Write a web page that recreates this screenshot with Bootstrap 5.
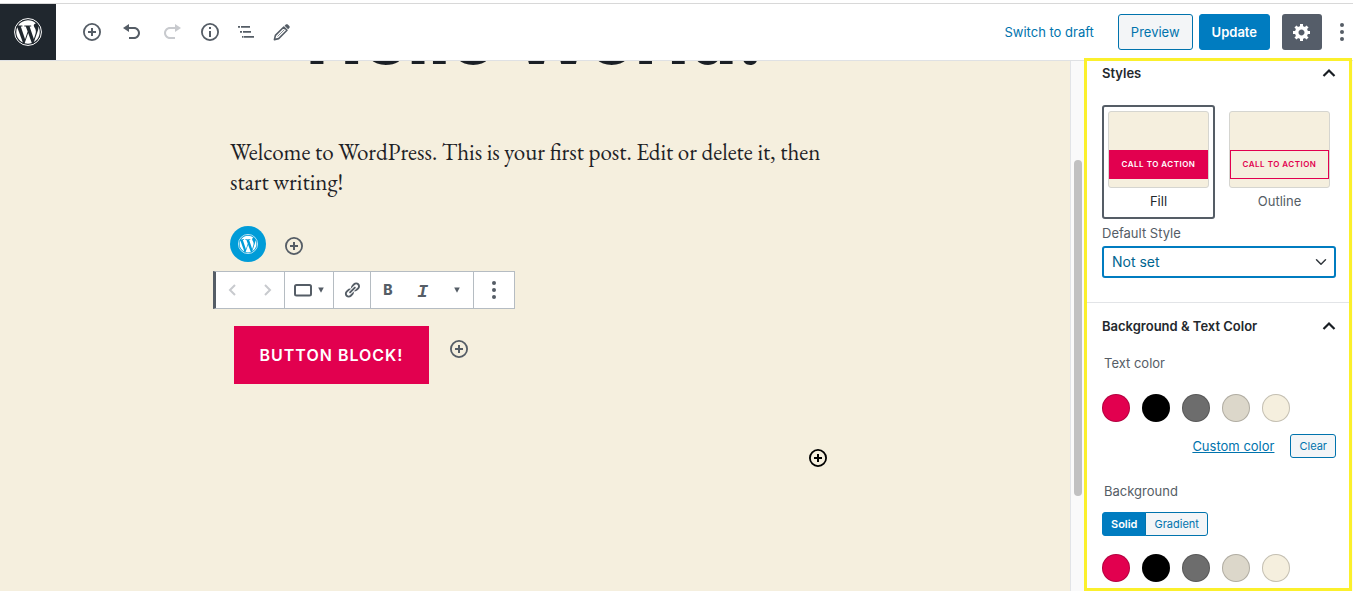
<!DOCTYPE html>
<html lang="en">
<head>
<meta charset="utf-8">
<meta name="viewport" content="width=device-width, initial-scale=1">
<title>Edit Post</title>
<link href="https://cdn.jsdelivr.net/npm/bootstrap@5.3.0/dist/css/bootstrap.min.css" rel="stylesheet">
<style>
  :root { --wp-blue: #007cc0; --ink: #555d66; --cream: #f5efde; --accent: #e2004f; --rule: #dfe1e4; }
  body { font-family: Inter, "Liberation Sans", sans-serif; font-size: 13px; line-height: 20px; color: #23282d; padding-top: 3px; }
  svg { display: block; fill: currentColor; }
  .icon-btn { border: 0; background: none; padding: 0; color: var(--ink); display: flex; align-items: center; justify-content: center; }
  .icon-btn:disabled { color: #c8cace; }
  .topbar { height: 58px; border-top: 1px solid #d8d8d8; border-bottom: 1px solid var(--rule); }
  .site-logo { width: 56px; background: #20272e; color: #fff; }
  .tools { gap: 20px; padding-left: 26px; }
  .tools + .tools { gap: 18px; padding-left: 18px; }
  .actions { gap: 6px; padding: 0 12px 0 24px; }
  .btn { --bs-btn-font-size: 13px; --bs-btn-line-height: 20px; --bs-btn-border-radius: 3px; }
  .btn-wp { --bs-btn-color: #fff; --bs-btn-bg: var(--wp-blue); --bs-btn-border-color: var(--wp-blue); --bs-btn-font-weight: 600; }
  .btn-wp-line { --bs-btn-color: #0073ad; --bs-btn-bg: #f3f5f7; --bs-btn-border-color: #0073ad; }
  .btn-bar { --bs-btn-padding-x: 12px; --bs-btn-padding-y: 7px; }
  .btn-mini { --bs-btn-font-size: 11px; --bs-btn-line-height: 16px; --bs-btn-padding-x: 8px; --bs-btn-padding-y: 3px; }
  .gear { width: 40px; height: 36px; border-radius: 3px; background: #555d69; color: #fff; margin-right: 9px; }
  .wp-link { color: #0073ad; }

  .workspace, .canvas { min-height: 0; min-width: 0; }
  .canvas { background: var(--cream); }
  .post { max-width: 610px; }
  .post-title { font-size: 75px; line-height: 80px; font-weight: 800; margin-top: -64px; color: #1a1f25; }
  .post-text { font-family: "EB Garamond", "Liberation Serif", serif; font-size: 23px; line-height: 30px; margin-top: 60px; color: #1e2226; }
  .embed-row { margin-top: 29px; gap: 18px; }
  .block-logo { width: 36px; height: 36px; background: #009cd8; color: #fff; }
  .block-bar { margin: 9px 0 17px -17px; width: 302px; height: 38px; border: 1px solid #b5bcc2; border-left: 3px solid var(--ink); background: #fff; }
  .block-bar > div { border-right: 1px solid #b5bcc2; }
  .block-bar > div:last-child { border-right: 0; }
  .bar-move { width: 69px; }
  .bar-type { width: 49px; }
  .bar-link { width: 37px; }
  .bar-text { width: 103px; }
  .cta-row { gap: 20px; padding-left: 4px; }
  .cta-row .icon-btn { margin-top: 13px; }
  .cta { width: 195px; height: 58px; border: 0; background: var(--accent); color: #fff; font-size: 16px; font-weight: 600; letter-spacing: 1px; }
  .glyph-b { font-size: 14px; font-weight: 800; }
  .glyph-i { font-family: "Liberation Mono", monospace; font-size: 18px; font-weight: 700; font-style: italic; }

  .sidebar { width: 283px; background: #fafafa; border-left: 1px solid #e2e4e7; }
  .scroll-track { width: 13px; }
  .scroll-thumb { width: 8px; height: 336px; margin: 99px 0 0 3px; border-radius: 4px; background: #c1c1c1; }
  .settings { margin: -3px 1px 0 0; border: 3px solid #fbf02c; background: #fff; }
  .pane { padding: 2px 13px 24px 15px; }
  .pane + .pane { border-top: 1px solid #e2e4e7; padding: 13px 13px 0 15px; }
  .pane h2 { font-size: 13px; line-height: 20px; font-weight: 600; margin: 0; }
  .pane .icon-btn { color: #191e23; }
  .choices { margin: 22px 0 4px; gap: 8px; }
  .choice { width: 113px; border: 2px solid transparent; border-radius: 3px; background: none; padding: 4px 4px 6px; color: var(--ink); }
  .choice.active { border-color: var(--ink); color: #23282d; }
  .preview { display: block; height: 77px; border: 1px solid #d5d5d0; border-radius: 3px; background: var(--cream); padding-top: 38px; margin-bottom: 3px; }
  .preview-btn { display: block; height: 29px; font-size: 8px; line-height: 27px; font-weight: 600; letter-spacing: .5px; border: 1px solid var(--accent); color: var(--accent); white-space: nowrap; }
  .active .preview-btn { background: var(--accent); color: #fff; }
  .muted-label { color: var(--ink); }
  .style-select { height: 32px; margin-top: 3px; padding: 0 30px 0 8px; font-size: 14px; line-height: 20px; border: 2px solid var(--wp-blue); border-radius: 3px; color: #006590; background-size: 14px 12px; background-position: right 6px center; }
  .group-label { color: var(--ink); padding-left: 2px; margin: 17px 0 21px; }
  .custom-row { margin: 12px 0 23px; }
  .custom-row + .group-label { margin-bottom: 11px; }
  .fill-kind { margin-bottom: 18px; }
  .swatches { gap: 12px; }
  .swatch { width: 28px; height: 28px; padding: 0; border-radius: 50%; border: 1px solid rgba(0,0,0,.2); }
</style>
</head>
<body class="vh-100 d-flex flex-column overflow-hidden bg-white">

<svg class="d-none" aria-hidden="true">
  <symbol id="wp" viewBox="0 0 128 128">
    <path d="M100 61.3c0-6.6-2.4-11.2-4.4-14.7-2.7-4.4-5.2-8.1-5.2-12.5 0-4.9 3.7-9.5 9-9.5h.7C90.5 15.8 77.8 10.4 63.9 10.4c-18.7 0-35.1 9.6-44.7 24.1 1.3 0 2.4.1 3.4.1 5.6 0 14.3-.7 14.3-.7 2.9-.2 3.2 4.1.3 4.4 0 0-2.9.3-6.1.5l19.5 58.1L62.4 61.7 54 38.8c-2.9-.2-5.6-.5-5.6-.5-2.9-.2-2.5-4.6.3-4.4 0 0 8.8.7 14.1.7 5.6 0 14.3-.7 14.3-.7 2.9-.2 3.2 4.1.3 4.4 0 0-2.9.3-6.1.5l19.4 57.6 5.5-17.5C98.5 71.5 100 65.9 100 61.3z"/>
    <path d="M64.8 68.6l-16.1 46.8c4.8 1.4 9.9 2.2 15.2 2.2 6.2 0 12.2-1.1 17.8-3.1-.1-.2-.3-.5-.4-.7L64.8 68.6z"/>
    <path d="M111 38.2c.2 1.7.4 3.5.4 5.5 0 5.4-1 11.5-4.1 19.2l-16.4 47.3c15.9-9.3 26.7-26.5 26.7-46.3C117.5 54.6 115.1 45.8 111 38.2z"/>
    <path d="M10.3 64c0 21.2 12.3 39.6 30.2 48.3L14.9 42.2C11.9 48.9 10.3 56.2 10.3 64z"/>
    <circle cx="64" cy="64" r="61.5" fill="none" stroke="currentColor" stroke-width="4.5"/>
  </symbol>
  <symbol id="plus" viewBox="0 0 20 20">
    <circle cx="10" cy="10" r="8.1" fill="none" stroke="currentColor" stroke-width="1.8"/>
    <path d="M9 6h2v3h3v2h-3v3H9v-3H6V9h3z"/>
  </symbol>
  <symbol id="up" viewBox="3 0 14 20"><path d="M4.5 13 10 7.5 15.5 13" fill="none" stroke="currentColor" stroke-width="2.2"/></symbol>
  <symbol id="down" viewBox="0 0 10 10"><path d="M1.5 2h7L5 8.500z"/></symbol>
  <symbol id="dots" viewBox="0 0 20 20"><circle cx="10" cy="3" r="2"/><circle cx="10" cy="10" r="2"/><circle cx="10" cy="17" r="2"/></symbol>
</svg>

<header class="topbar d-flex flex-shrink-0 bg-white">
  <a href="#" class="site-logo d-flex align-items-center justify-content-center" aria-label="View posts"><svg width="28" height="28"><use href="#wp"/></svg></a>
  <div class="tools d-flex align-items-center">
    <button class="icon-btn" aria-label="Add block"><svg width="20" height="20"><use href="#plus"/></svg></button>
    <button class="icon-btn" aria-label="Undo"><svg width="20" height="20" viewBox="0 0 20 20"><path d="M12 5H7V2L1 6l6 4V7h5c2.200 0 4 1.800 4 4s-1.800 4-4 4H7v2h5c3.300 0 6-2.700 6-6s-2.700-6-6-6z"/></svg></button>
    <button class="icon-btn" disabled aria-label="Redo"><svg width="20" height="20" viewBox="0 0 20 20"><path d="M8 5h5V2l6 4-6 4V7H8c-2.200 0-4 1.800-4 4s1.800 4 4 4h5v2H8c-3.300 0-6-2.700-6-6s2.700-6 6-6z"/></svg></button>
  </div>
  <div class="tools d-flex align-items-center">
    <button class="icon-btn" aria-label="Content structure"><svg width="20" height="20" viewBox="0 0 20 20"><circle cx="10" cy="10" r="8.100" fill="none" stroke="currentColor" stroke-width="1.800"/><path d="M9 5h2v2H9zM9 9h2v6H9z"/></svg></button>
    <button class="icon-btn" aria-label="Block navigation"><svg width="16" height="20" viewBox="0 0 16 20"><path d="M3 4h9v1.700H3zM5 9h8v1.700H5zM6 14h10v1.700H6zM0 4h2v1.700H0zM2 9h2v1.700H2zM4 14h1.500v1.700H4z"/></svg></button>
    <button class="icon-btn" aria-label="Edit"><svg width="18" height="20" viewBox="0 0 18 20"><path d="M2.400 17.600l1-4.200 8.400-8.400 3.200 3.200-8.400 8.400z" fill="none" stroke="currentColor" stroke-width="1.600" stroke-linejoin="round"/><path d="M12.600 3.800l1.200-1.200c.6-.6 1.400-.6 2 0l1.500 1.500c.6.6.6 1.400 0 2l-1.200 1.200z"/><path d="M5.500 14.500l7-7" stroke="currentColor" stroke-width=".7"/></svg></button>
  </div>
  <div class="d-flex align-items-center ms-auto">
    <a href="#" class="wp-link text-decoration-none">Switch to draft</a>
    <div class="actions d-flex">
      <button class="btn btn-wp-line btn-bar">Preview</button>
      <button class="btn btn-wp btn-bar">Update</button>
    </div>
    <button class="icon-btn gear" aria-label="Settings"><svg width="20" height="20" viewBox="0 0 20 20"><path d="M18 12h-2.180c-.17.7-.44 1.350-.81 1.930l1.540 1.540-2.100 2.100-1.540-1.540c-.58.36-1.230.63-1.910.79V19H8v-2.180c-.68-.16-1.330-.43-1.910-.79l-1.540 1.540-2.120-2.120 1.540-1.540c-.36-.58-.63-1.230-.79-1.910H1V9.030h2.170c.16-.7.44-1.350.8-1.940L2.430 5.550l2.100-2.100 1.540 1.540c.58-.37 1.240-.64 1.930-.81V2h3v2.180c.68.16 1.330.43 1.910.79l1.540-1.540 2.120 2.120-1.540 1.540c.36.59.64 1.240.8 1.940H18V12zm-8.500 1.500c1.660 0 3-1.340 3-3s-1.340-3-3-3-3 1.340-3 3 1.340 3 3 3z"/></svg></button>
    <button class="icon-btn" aria-label="More tools and options"><svg width="22" height="20"><use href="#dots"/></svg></button>
  </div>
</header>

<div class="workspace d-flex flex-grow-1">
  <main class="canvas flex-grow-1 overflow-hidden">
    <div class="post mx-auto">
      <h1 class="post-title text-center text-nowrap mb-0">Hello World!</h1>
      <p class="post-text mb-0">Welcome to WordPress. This is your first post. Edit or delete it, then start writing!</p>
      <div class="embed-row d-flex align-items-center">
        <a href="#" class="block-logo rounded-circle d-flex align-items-center justify-content-center" aria-label="WordPress"><svg width="20" height="20"><use href="#wp"/></svg></a>
        <button class="icon-btn pt-1" aria-label="Add block"><svg width="20" height="20"><use href="#plus"/></svg></button>
      </div>
      <div class="block-bar d-flex" role="toolbar" aria-label="Block tools">
        <div class="bar-move d-flex justify-content-around">
          <button class="icon-btn" disabled aria-label="Move left"><svg width="20" height="20" viewBox="0 0 20 20"><path d="M12 5 7 10l5 5" fill="none" stroke="currentColor" stroke-width="2"/></svg></button>
          <button class="icon-btn" disabled aria-label="Move right"><svg width="20" height="20" viewBox="0 0 20 20"><path d="m8 5 5 5-5 5" fill="none" stroke="currentColor" stroke-width="2"/></svg></button>
        </div>
        <div class="bar-type d-flex justify-content-center">
          <button class="icon-btn gap-1" aria-label="Change block type"><svg width="20" height="20" viewBox="0 0 20 20"><rect x="2" y="5" width="16" height="10.500" rx="1.500" fill="none" stroke="currentColor" stroke-width="2"/></svg><svg width="8" height="8"><use href="#down"/></svg></button>
        </div>
        <div class="bar-link d-flex justify-content-center">
          <button class="icon-btn" aria-label="Link"><svg width="16" height="16" viewBox="1 1 18 18"><path d="M17.740 2.760c1.680 1.690 1.680 4.410 0 6.100l-1.530 1.520c-1.120 1.120-2.700 1.470-4.140 1.090l2.620-2.610.76-.77.76-.76c.84-.84.84-2.200 0-3.040-.84-.85-2.200-.85-3.040 0l-.77.76-3.380 3.380c-.37-1.440-.02-3.020 1.100-4.140l1.520-1.530c1.690-1.680 4.420-1.680 6.100 0zM8.590 13.430l5.340-5.340c.42-.42.42-1.100 0-1.520-.44-.43-1.130-.39-1.530 0l-5.330 5.340c-.42.42-.42 1.100 0 1.520.44.43 1.130.39 1.520 0zm-.76 2.290l4.140-4.150c.38 1.440.03 3.020-1.090 4.140l-1.520 1.530c-1.690 1.680-4.410 1.680-6.100 0-1.680-1.680-1.680-4.420 0-6.100l1.530-1.520c1.120-1.120 2.700-1.470 4.140-1.100l-4.140 4.150c-.85.84-.85 2.200 0 3.050.84.84 2.200.84 3.040 0z"/></svg></button>
        </div>
        <div class="bar-text d-flex justify-content-around">
          <button class="icon-btn glyph-b" aria-label="Bold">B</button>
          <button class="icon-btn glyph-i pt-1" aria-label="Italic">I</button>
          <button class="icon-btn" aria-label="More text controls"><svg width="8" height="8"><use href="#down"/></svg></button>
        </div>
        <div class="d-flex justify-content-center flex-grow-1">
          <button class="icon-btn" aria-label="More options"><svg width="20" height="20"><use href="#dots"/></svg></button>
        </div>
      </div>
      <div class="cta-row d-flex align-items-start">
        <button class="cta">BUTTON BLOCK!</button>
        <button class="icon-btn" aria-label="Add button"><svg width="20" height="20"><use href="#plus"/></svg></button>
      </div>
      <div class="d-flex justify-content-end mt-5 pt-3 pe-2">
        <button class="icon-btn text-black me-1" aria-label="Add block"><svg width="20" height="20"><use href="#plus"/></svg></button>
      </div>
    </div>
  </main>

  <aside class="sidebar d-flex flex-shrink-0">
    <div class="scroll-track"><div class="scroll-thumb"></div></div>
    <div class="settings flex-grow-1 position-relative">
      <section class="pane">
        <div class="d-flex justify-content-between align-items-center">
          <h2>Styles</h2>
          <button class="icon-btn" aria-label="Collapse Styles"><svg width="14" height="20"><use href="#up"/></svg></button>
        </div>
        <div class="choices d-flex">
          <button class="choice active"><span class="preview"><span class="preview-btn">CALL TO ACTION</span></span>Fill</button>
          <button class="choice"><span class="preview"><span class="preview-btn">CALL TO ACTION</span></span>Outline</button>
        </div>
        <label for="default-style" class="muted-label d-block">Default Style</label>
        <select id="default-style" class="form-select style-select"><option>Not set</option></select>
      </section>
      <section class="pane">
        <div class="d-flex justify-content-between align-items-center">
          <h2>Background &amp; Text Color</h2>
          <button class="icon-btn" aria-label="Collapse Background and Text Color"><svg width="14" height="20"><use href="#up"/></svg></button>
        </div>
        <div class="group-label">Text color</div>
        <div class="swatches d-flex" role="group" aria-label="Text color">
          <button class="swatch" style="background:#e2004f" aria-label="Accent"></button>
          <button class="swatch" style="background:#000000" aria-label="Primary"></button>
          <button class="swatch" style="background:#6d6d6d" aria-label="Secondary"></button>
          <button class="swatch" style="background:#dcd7ca" aria-label="Subtle"></button>
          <button class="swatch" style="background:#f5efde" aria-label="Background"></button>
        </div>
        <div class="custom-row d-flex justify-content-end align-items-center gap-3">
          <a href="#" class="wp-link">Custom color</a>
          <button class="btn btn-wp-line btn-mini">Clear</button>
        </div>
        <div class="group-label">Background</div>
        <div class="btn-group fill-kind" role="group" aria-label="Background type">
          <button class="btn btn-wp btn-mini">Solid</button>
          <button class="btn btn-wp-line btn-mini">Gradient</button>
        </div>
        <div class="swatches d-flex" role="group" aria-label="Background color">
          <button class="swatch" style="background:#e2004f" aria-label="Accent"></button>
          <button class="swatch" style="background:#000000" aria-label="Primary"></button>
          <button class="swatch" style="background:#6d6d6d" aria-label="Secondary"></button>
          <button class="swatch" style="background:#dcd7ca" aria-label="Subtle"></button>
          <button class="swatch" style="background:#f5efde" aria-label="Background"></button>
        </div>
      </section>
    </div>
  </aside>
</div>
<script src="https://cdn.jsdelivr.net/npm/bootstrap@5.3.0/dist/js/bootstrap.bundle.min.js"></script>
</body>
</html>
